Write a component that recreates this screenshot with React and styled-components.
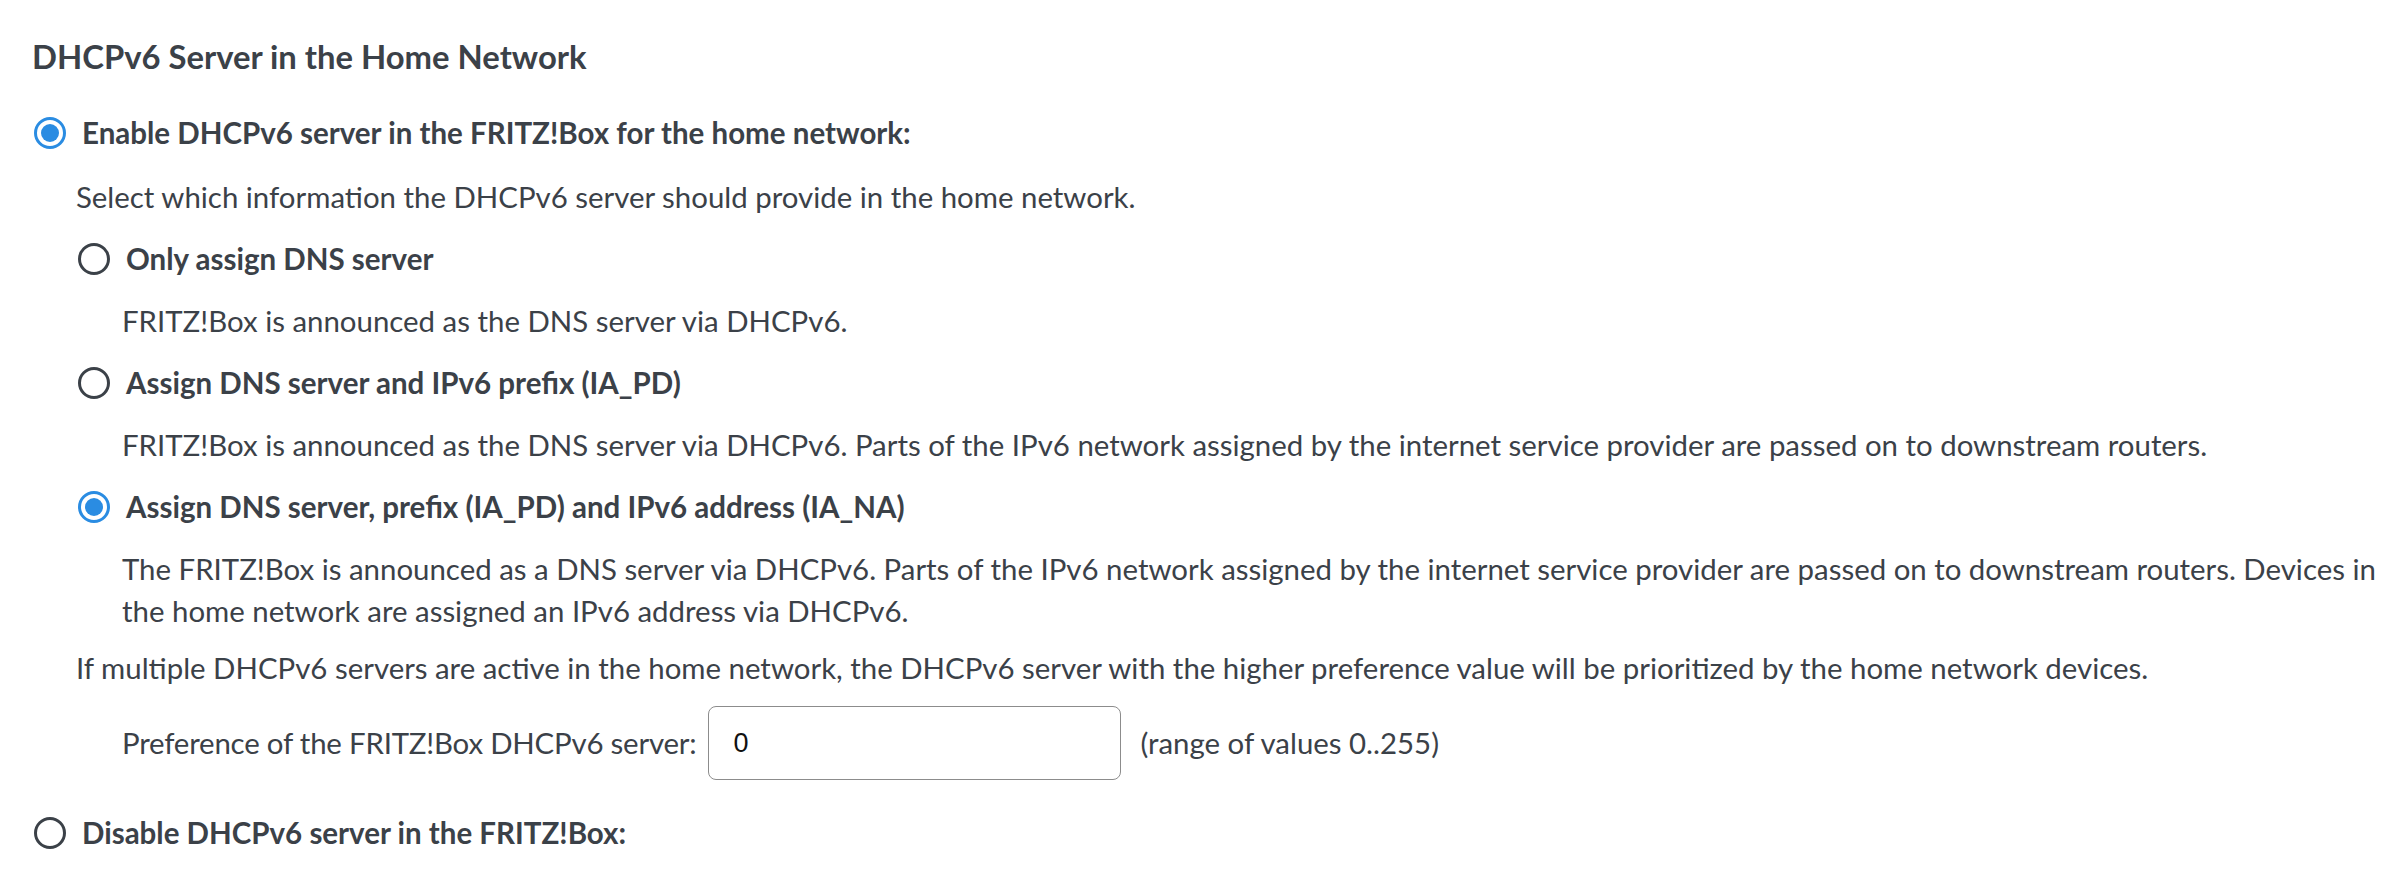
import React from 'react';
import styled, { createGlobalStyle } from 'styled-components';

const GlobalStyle = createGlobalStyle`
  body {
    margin: 0;
    background: #ffffff;
    font-family: Lato, "Liberation Sans", sans-serif;
    color: #3b4148;
  }
`;

const Section = styled.div`
  padding: 36px 0 0 32px;
  width: 2362px;
  font-size: 29.4px;
  line-height: 42px;
`;

const Title = styled.h2`
  margin: 0 0 34px;
  font-size: 32.8px;
  line-height: 42px;
  font-weight: 700;
`;

const RadioRow = styled.label`
  display: flex;
  align-items: center;
  gap: 16px;
  margin-top: ${(p) => p.$mt || '20px'};
  font-weight: 700;
  font-size: 29.5px;
  min-height: 42px;
`;

const RadioCircle = styled.span`
  flex: none;
  width: 32px;
  height: 32px;
  box-sizing: border-box;
  border-radius: 50%;
  border: 3px solid ${(p) => (p.$checked ? '#2a8ce2' : '#3b4148')};
  display: flex;
  align-items: center;
  justify-content: center;
  margin-left: 2px;

  &::after {
    content: '';
    display: ${(p) => (p.$checked ? 'block' : 'none')};
    width: 18px;
    height: 18px;
    border-radius: 50%;
    background: #2a8ce2;
  }
`;

const Nested = styled.div`
  margin: 22px 0 0 44px;
`;

const Text = styled.p`
  margin: ${(p) => p.$mt || '0'} 0 0;
`;

const Desc = styled.p`
  margin: 20px 0 0 46px;
`;

const PrefRow = styled.div`
  display: flex;
  align-items: center;
  gap: 12px;
  margin: 17px 0 0 46px;
`;

const PrefLabel = styled.span`
  letter-spacing: -0.2px;
`;

const NumberInput = styled.input`
  width: 413px;
  height: 74px;
  box-sizing: border-box;
  border: 1.5px solid #8c8c8c;
  border-radius: 8px;
  padding: 0 24px;
  font-family: "Liberation Sans", Arial, sans-serif;
  font-size: 27px;
  color: #111;
  outline: none;
`;

const Hint = styled.span`
  margin-left: 7px;
`;

const Radio = ({ checked, children, mt }) => (
  <RadioRow $mt={mt}>
    <RadioCircle $checked={checked} />
    <span>{children}</span>
  </RadioRow>
);

const App = () => {
  return (
    <>
      <GlobalStyle />
      <Section>
        <Title>DHCPv6 Server in the Home Network</Title>
        <Radio checked mt="0">Enable DHCPv6 server in the FRITZ!Box for the home network:</Radio>
        <Nested>
          <Text>Select which information the DHCPv6 server should provide in the home network.</Text>
          <Radio>Only assign DNS server</Radio>
          <Desc>FRITZ!Box is announced as the DNS server via DHCPv6.</Desc>
          <Radio>Assign DNS server and IPv6 prefix (IA_PD)</Radio>
          <Desc>
            FRITZ!Box is announced as the DNS server via DHCPv6. Parts of the IPv6 network assigned by the internet service provider are passed on to downstream routers.
          </Desc>
          <Radio checked>Assign DNS server, prefix (IA_PD) and IPv6 address (IA_NA)</Radio>
          <Desc>
            The FRITZ!Box is announced as a DNS server via DHCPv6. Parts of the IPv6 network assigned by the internet service provider are passed on to downstream routers. Devices in the home network are assigned an IPv6 address via DHCPv6.
          </Desc>
          <Text $mt="15px">
            If multiple DHCPv6 servers are active in the home network, the DHCPv6 server with the higher preference value will be prioritized by the home network devices.
          </Text>
          <PrefRow>
            <PrefLabel>Preference of the FRITZ!Box DHCPv6 server:</PrefLabel>
            <NumberInput type="text" defaultValue="0" />
            <Hint>(range of values 0..255)</Hint>
          </PrefRow>
        </Nested>
        <Radio mt="32px">Disable DHCPv6 server in the FRITZ!Box:</Radio>
      </Section>
    </>
  );
};

export default App;
